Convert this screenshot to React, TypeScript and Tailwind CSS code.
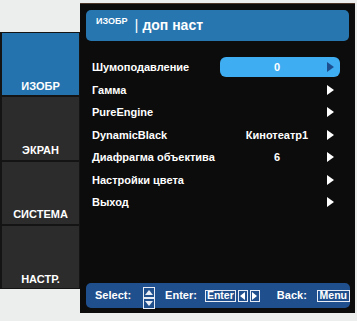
import React from "react";

const font = { fontFamily: '"Liberation Sans", Arial, Helvetica, sans-serif' };

function Arrow({ color = "#ffffff" }: { color?: string }) {
  return (
    <svg width="7" height="10" viewBox="0 0 7 10" className="block">
      <polygon points="0,0 7,5 0,10" fill={color} />
    </svg>
  );
}

const rows: { label: string; value?: string; active?: boolean }[] = [
  { label: "Шумоподавление", value: "0", active: true },
  { label: "Гамма" },
  { label: "PureEngine" },
  { label: "DynamicBlack", value: "Кинотеатр1" },
  { label: "Диафрагма объектива", value: "6" },
  { label: "Настройки цвета" },
  { label: "Выход" },
];

const tabs = [
  { label: "ИЗОБР", active: true },
  { label: "ЭКРАН" },
  { label: "СИСТЕМА" },
  { label: "НАСТР." },
];

export default function App() {
  return (
    <div
      className="w-[357px] h-[321px] bg-[#eceeed] flex flex-row items-start overflow-hidden text-white"
      style={font}
    >
      {/* Sidebar */}
      <div className="mt-[32px] w-[80px] h-[257px] bg-[#141414] pl-[2px] pr-[1px] py-[1px] flex flex-col gap-[2px]">
        {tabs.map((t) => (
          <div
            key={t.label}
            className={`flex-1 flex items-end justify-center pb-[1px] text-[11px] font-bold ${
              t.active ? "bg-[#2473ae]" : "bg-[#2c2c2c]"
            }`}
          >
            {t.label}
          </div>
        ))}
      </div>

      {/* Main panel */}
      <div className="mt-[3px] w-[275px] h-[310px] bg-[#0c0c0c] border-t border-[#4a3528] flex flex-col pl-[6px] pt-[6px] pb-[5px]">
        {/* Header */}
        <div className="w-[263px] h-[31px] rounded-[5px] bg-[#2776b0] flex items-center pl-[10px]">
          <span className="text-[9px] font-bold -mt-[8px]">ИЗОБР</span>
          <span className="ml-[7px] text-[15px] font-light -mt-[1px]">|</span>
          <span className="ml-[4px] text-[14px] font-bold">доп наст</span>
        </div>

        {/* Rows */}
        <div className="mt-[15px] flex flex-col">
          {rows.map((r) => (
            <div key={r.label} className="h-[22.5px] flex items-center">
              <div className="w-[134px] pl-[6px] text-[11px] font-bold whitespace-nowrap">
                {r.label}
              </div>
              <div
                className={`w-[120px] h-[20px] rounded-[6px] flex items-center ${
                  r.active ? "bg-[#3fadf2]" : ""
                }`}
              >
                <span className="w-[107px] pl-[7px] text-center text-[11px] font-bold">
                  {r.value ?? ""}
                </span>
                <Arrow color={r.active ? "#1d4f8f" : "#ffffff"} />
              </div>
            </div>
          ))}
        </div>

        {/* Footer */}
        <div className="mt-auto w-[264px] h-[25px] rounded-[5px] bg-[#204f8d] flex items-center pl-[9px] text-[11px] font-bold">
          <span>Select:</span>
          <svg width="12" height="22" viewBox="0 0 12 22" className="ml-[12px] mt-[4px] block">
            <rect x="0.5" y="0.5" width="11" height="10" fill="none" stroke="#e8ecf4" strokeWidth="1" />
            <rect x="0.5" y="11.5" width="11" height="10" fill="none" stroke="#e8ecf4" strokeWidth="1" />
            <polygon points="2,8 6,3 10,8" fill="#e8ecf4" />
            <polygon points="2,14 6,19 10,14" fill="#e8ecf4" />
          </svg>
          <span className="ml-[10px]">Enter:</span>
          <span className="ml-[8px] h-[12px] w-[31px] border border-[#e8ecf4] flex items-center justify-center text-[10.5px] leading-none">
            Enter
          </span>
          <span className="ml-[2px] h-[12px] w-[10px] border border-[#e8ecf4] flex items-center justify-center">
            <svg width="5" height="8" viewBox="0 0 5 8" className="block">
              <polygon points="5,0 0,4 5,8" fill="#ffffff" />
            </svg>
          </span>
          <span className="ml-[2px] h-[12px] w-[10px] border border-[#e8ecf4] flex items-center justify-center">
            <svg width="5" height="8" viewBox="0 0 5 8" className="block">
              <polygon points="0,0 5,4 0,8" fill="#ffffff" />
            </svg>
          </span>
          <span className="ml-[17px]">Back:</span>
          <span className="ml-[10px] h-[12px] w-[33px] border border-[#e8ecf4] flex items-center justify-center text-[10.5px] leading-none">
            Menu
          </span>
        </div>
      </div>
    </div>
  );
}
